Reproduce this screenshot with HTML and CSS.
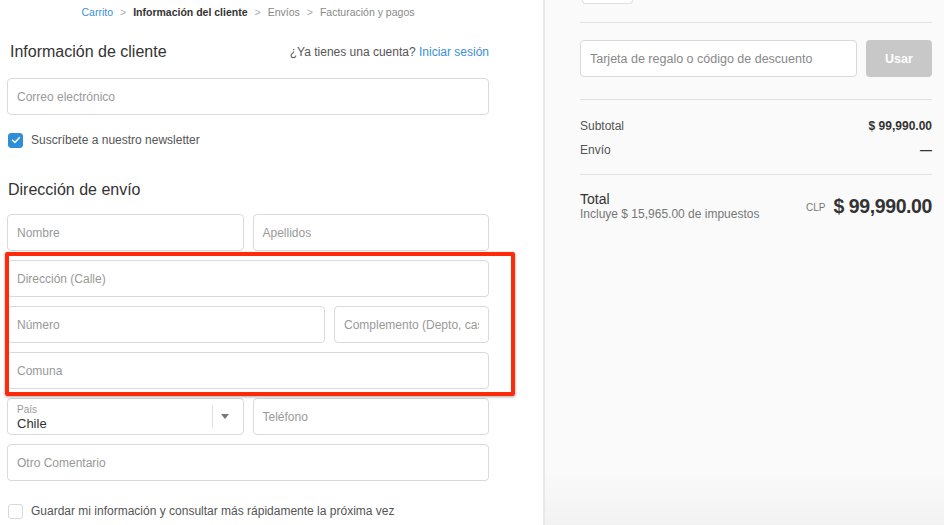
FILE: index.html
```html
<!DOCTYPE html>
<html lang="es">
<head>
<meta charset="utf-8">
<title>Información del cliente</title>
<link rel="stylesheet" href="styles.css">
</head>
<body>
<div class="page">
  <main class="main">
    <nav class="crumbs">
      <span class="crumb-link">Carrito</span>
      <span class="sep">&gt;</span>
      <span class="crumb-current">Información del cliente</span>
      <span class="sep">&gt;</span>
      <span class="crumb-next">Envíos</span>
      <span class="sep">&gt;</span>
      <span class="crumb-next">Facturación y pagos</span>
    </nav>

    <div class="section-head">
      <h2 class="title">Información de cliente</h2>
      <p class="login">¿Ya tienes una cuenta? <span class="link">Iniciar sesión</span></p>
    </div>

    <div class="field email"><span class="ph">Correo electrónico</span></div>

    <label class="check-row news">
      <span class="box checked">
        <svg width="10" height="8" viewBox="0 0 10 8"><path d="M1.5 4.2 L3.9 6.4 L8.5 1.6" fill="none" stroke="#fff" stroke-width="1.5" stroke-linecap="round" stroke-linejoin="round"/></svg>
      </span>
      <span class="check-text">Suscríbete a nuestro newsletter</span>
    </label>

    <h2 class="title ship">Dirección de envío</h2>

    <div class="fields">
      <div class="row">
        <div class="field"><span class="ph">Nombre</span></div>
        <div class="field"><span class="ph">Apellidos</span></div>
      </div>
      <div class="row">
        <div class="field"><span class="ph">Dirección (Calle)</span></div>
      </div>
      <div class="row">
        <div class="field numero"><span class="ph">Número</span></div>
        <div class="field compl"><span class="ph clip">Complemento (Depto, casa)</span></div>
      </div>
      <div class="row">
        <div class="field"><span class="ph">Comuna</span></div>
      </div>
      <div class="row">
        <div class="field select">
          <div class="sel-text">
            <span class="sel-label">País</span>
            <span class="sel-value">Chile</span>
          </div>
          <span class="sel-div"></span>
          <span class="caret"></span>
        </div>
        <div class="field"><span class="ph">Teléfono</span></div>
      </div>
      <div class="row">
        <div class="field"><span class="ph">Otro Comentario</span></div>
      </div>
      <div class="highlight"></div>
    </div>

    <label class="check-row save">
      <span class="box"></span>
      <span class="check-text">Guardar mi información y consultar más rápidamente la próxima vez</span>
    </label>
  </main>

  <aside class="side">
    <div class="stub"></div>
    <hr class="rule first">
    <div class="discount">
      <div class="field dinput"><span class="ph">Tarjeta de regalo o código de descuento</span></div>
      <button class="use">Usar</button>
    </div>
    <hr class="rule">
    <div class="lines">
      <div class="line"><span>Subtotal</span><span class="amt">$ 99,990.00</span></div>
      <div class="line"><span>Envío</span><span class="amt">—</span></div>
    </div>
    <hr class="rule">
    <div class="total">
      <div class="total-left">
        <span class="total-label">Total</span>
        <span class="tax">Incluye $ 15,965.00 de impuestos</span>
      </div>
      <div class="total-right">
        <span class="cur">CLP</span>
        <span class="big">$ 99,990.00</span>
      </div>
    </div>
  </aside>
</div>
</body>
</html>
```

FILE: styles.css
```css
* { box-sizing: border-box; }
html, body { margin: 0; padding: 0; }
body {
  font-family: "Liberation Sans", Arial, sans-serif;
  color: #333;
  background: #fff;
  width: 944px;
  height: 525px;
  overflow: hidden;
}
.page {
  display: flex;
  height: 525px;
}
.main {
  width: 543px;
  padding-left: 7px;
  flex: none;
}
.crumbs {
  width: 482px;
  display: flex;
  justify-content: center;
  gap: 7px;
  font-size: 10.5px;
  line-height: 14px;
  padding-top: 5px;
  height: 40px;
  color: #777;
}
.crumb-link { color: #3b8fd6; }
.crumb-current { color: #333; font-weight: 600; }
.crumb-next { color: #888; }
.sep { color: #aaa; }

.section-head {
  width: 482px;
  display: flex;
  justify-content: space-between;
  align-items: center;
  height: 22px;
  margin-top: 1px;
}
.title {
  margin: 0;
  font-size: 16px;
  font-weight: normal;
  color: #333;
  padding-left: 3px;
  line-height: 22px;
}
.login {
  margin: 0;
  font-size: 12px;
  color: #555;
}
.link { color: #3b8fd6; }

.field {
  height: 37px;
  border: 1px solid #d9d9d9;
  border-radius: 4px;
  background: #fff;
  display: flex;
  align-items: center;
  padding: 0 9px;
  font-size: 12px;
  flex: 1;
  min-width: 0;
}
.ph { color: #999; white-space: nowrap; }
.clip { overflow: hidden; }
.email { width: 482px; margin-top: 15px; }

.check-row {
  display: flex;
  align-items: center;
  gap: 8px;
  font-size: 12px;
  color: #555;
  padding-left: 1px;
}
.news { margin-top: 17px; height: 16px; }
.box {
  width: 15px;
  height: 15px;
  border-radius: 3px;
  border: 1px solid #d9d9d9;
  background: #fff;
  display: flex;
  align-items: center;
  justify-content: center;
  flex: none;
}
.box.checked { background: #2f8fd6; border-color: #2f8fd6; }

.ship { margin-top: 31px; padding-left: 1px; }

.fields {
  position: relative;
  width: 482px;
  margin-top: 13px;
  display: flex;
  flex-direction: column;
  gap: 9px;
}
.row {
  display: flex;
  gap: 9px;
}
.numero { flex: 0 0 318px; }
.compl { flex: 1; }

.sel-text {
  display: flex;
  flex-direction: column;
  flex: 1;
  padding-top: 2px;
}
.sel-label { font-size: 10px; color: #999; line-height: 12px; }
.sel-value { font-size: 13px; color: #333; line-height: 15px; }
.sel-div {
  width: 1px;
  height: 23px;
  background: #e0e0e0;
}
.caret {
  width: 21px;
  height: 100%;
  position: relative;
}
.caret::after {
  content: "";
  position: absolute;
  left: 8px;
  top: 15px;
  border-left: 4.5px solid transparent;
  border-right: 4.5px solid transparent;
  border-top: 5px solid #777;
}

.highlight {
  position: absolute;
  left: -2px;
  top: 38px;
  width: 510px;
  height: 144px;
  border: 4px solid #ff2a0a;
  border-radius: 2px;
  box-shadow: 0 1px 3px rgba(0,0,0,0.35);
  pointer-events: none;
}

.save { margin-top: 22px; height: 16px; }

.side {
  flex: 1;
  background: #fafafa;
  border-left: 2px solid #e8e8e8;
  padding: 0 12px 0 35px;
  background-image: linear-gradient(to bottom, rgba(0,0,0,0) 470px, rgba(0,0,0,0.03) 525px);
}
.stub {
  width: 51px;
  height: 4px;
  margin-left: 2px;
  border: 1px solid #e1e1e1;
  border-top: none;
  border-radius: 0 0 5px 5px;
  background: #fff;
}
.rule {
  border: none;
  border-top: 1px solid #e1e1e1;
  margin: 0;
}
.rule.first { margin-top: 18px; }
.discount {
  display: flex;
  gap: 9px;
  margin: 17px 0 22px;
}
.dinput { height: 37px; flex: 0 0 277px; }
.dinput .ph { font-size: 12.5px; color: #888; }
.use {
  flex: 1;
  height: 37px;
  border: none;
  border-radius: 4px;
  background: #c8c8c8;
  color: #fff;
  font-family: "Liberation Sans", Arial, sans-serif;
  font-weight: bold;
  font-size: 12.5px;
}
.lines {
  padding: 19px 0 16px;
  display: flex;
  flex-direction: column;
  gap: 9px;
}
.line {
  display: flex;
  justify-content: space-between;
  font-size: 12px;
  color: #555;
  line-height: 15px;
}
.amt { font-weight: bold; color: #333; }
.total {
  display: flex;
  justify-content: space-between;
  align-items: center;
  padding-top: 16px;
}
.total-left {
  display: flex;
  flex-direction: column;
}
.total-label { font-size: 14px; color: #333; line-height: 16px; }
.tax { font-size: 12px; color: #777; line-height: 14px; }
.total-right {
  display: flex;
  align-items: center;
  gap: 8px;
}
.cur { font-size: 10px; color: #777; margin-top: 2px; }
.big { font-size: 19.5px; font-weight: bold; color: #333; letter-spacing: -0.4px; }
```
